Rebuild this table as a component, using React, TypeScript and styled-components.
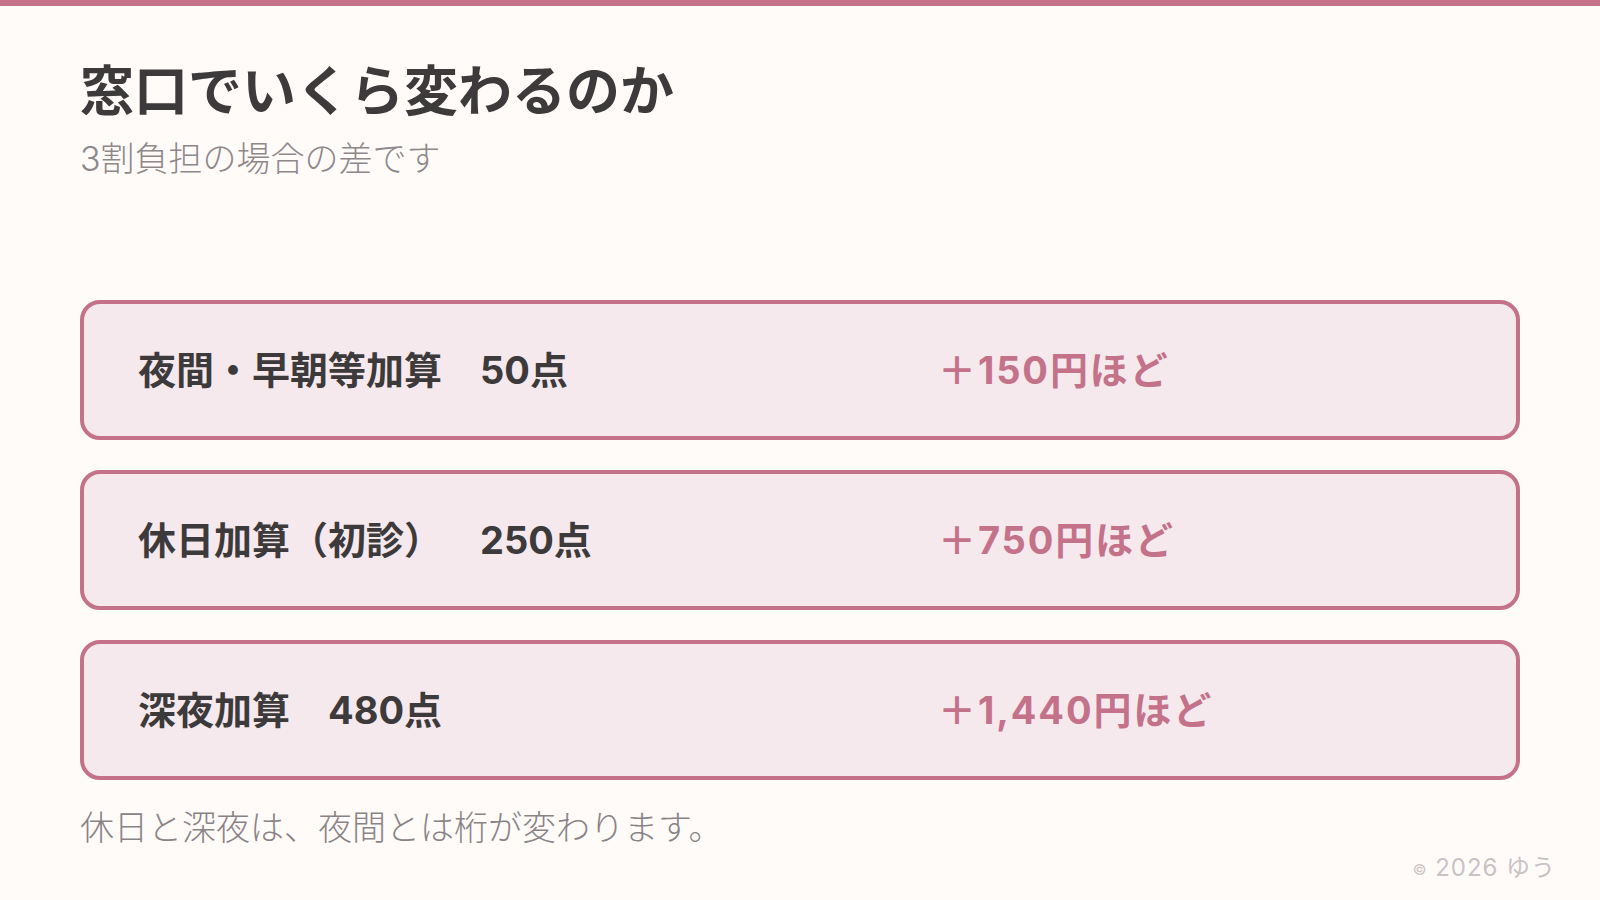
import * as React from "react";
import styled, { createGlobalStyle } from "styled-components";

const GlobalStyle = createGlobalStyle`
  html, body {
    margin: 0;
    padding: 0;
    background: #fffbf9;
  }
  body {
    font-family: "Inter", "Noto Sans CJK JP", sans-serif;
    color: #3d3a3b;
    text-spacing-trim: space-all;
  }
`;

const Slide = styled.div`
  width: 1600px;
  height: 900px;
  display: flex;
  flex-direction: column;
  background: #fffbf9;
  border-top: 6px solid #c4718a;
  box-sizing: border-box;
`;

const Content = styled.main`
  display: flex;
  flex-direction: column;
  padding: 54px 80px 0;
`;

const Title = styled.h1`
  margin: 0;
  font-size: 54px;
  line-height: 1.2;
  font-weight: 700;
  color: #3d3a3b;
`;

const Subtitle = styled.p`
  margin: 10px 0 0;
  font-size: 34px;
  line-height: 1.4;
  font-weight: 300;
  color: #8f878a;
`;

const CardList = styled.div`
  display: flex;
  flex-direction: column;
  gap: 30px;
  margin-top: 118px;
`;

const Card = styled.div`
  height: 140px;
  box-sizing: border-box;
  display: grid;
  grid-template-columns: 800px 1fr;
  align-items: center;
  padding: 0 54px;
  border: 4px solid #c4718a;
  border-radius: 20px;
  background: #f5e9ee;
`;

const Label = styled.span`
  font-size: 38px;
  line-height: 1.2;
  font-weight: 700;
  color: #3d3a3b;
`;

const Amount = styled.span`
  font-size: 38px;
  line-height: 1.2;
  font-weight: 700;
  letter-spacing: 0.05em;
  color: #c4718a;
`;

const Note = styled.p`
  margin: 24px 0 0;
  font-size: 34px;
  line-height: 1.4;
  font-weight: 300;
  color: #8a8386;
`;

const Footer = styled.footer`
  display: flex;
  justify-content: flex-end;
  padding: 2px 44px 0 0;
`;

const Copyright = styled.span`
  font-size: 24px;
  line-height: 1.2;
  font-weight: 400;
  letter-spacing: 0.04em;
  color: #cbc2c6;

  small {
    font-size: 15px;
    vertical-align: 1px;
  }
`;

type Row = { label: string; amount: string };

const rows: Row[] = [
  { label: "夜間・早朝等加算　50点", amount: "＋150円ほど" },
  { label: "休日加算（初診）　250点", amount: "＋750円ほど" },
  { label: "深夜加算　480点", amount: "＋1,440円ほど" },
];

export default function App() {
  return (
    <>
      <GlobalStyle />
      <Slide>
        <Content>
          <Title>窓口でいくら変わるのか</Title>
          <Subtitle>3割負担の場合の差です</Subtitle>
          <CardList>
            {rows.map(r => (
              <Card key={r.label}>
                <Label>{r.label}</Label>
                <Amount>{r.amount}</Amount>
              </Card>
            ))}
          </CardList>
          <Note>休日と深夜は、夜間とは桁が変わります。</Note>
        </Content>
        <Footer>
          <Copyright>
            <small>©</small> 2026 ゆう
          </Copyright>
        </Footer>
      </Slide>
    </>
  );
}
